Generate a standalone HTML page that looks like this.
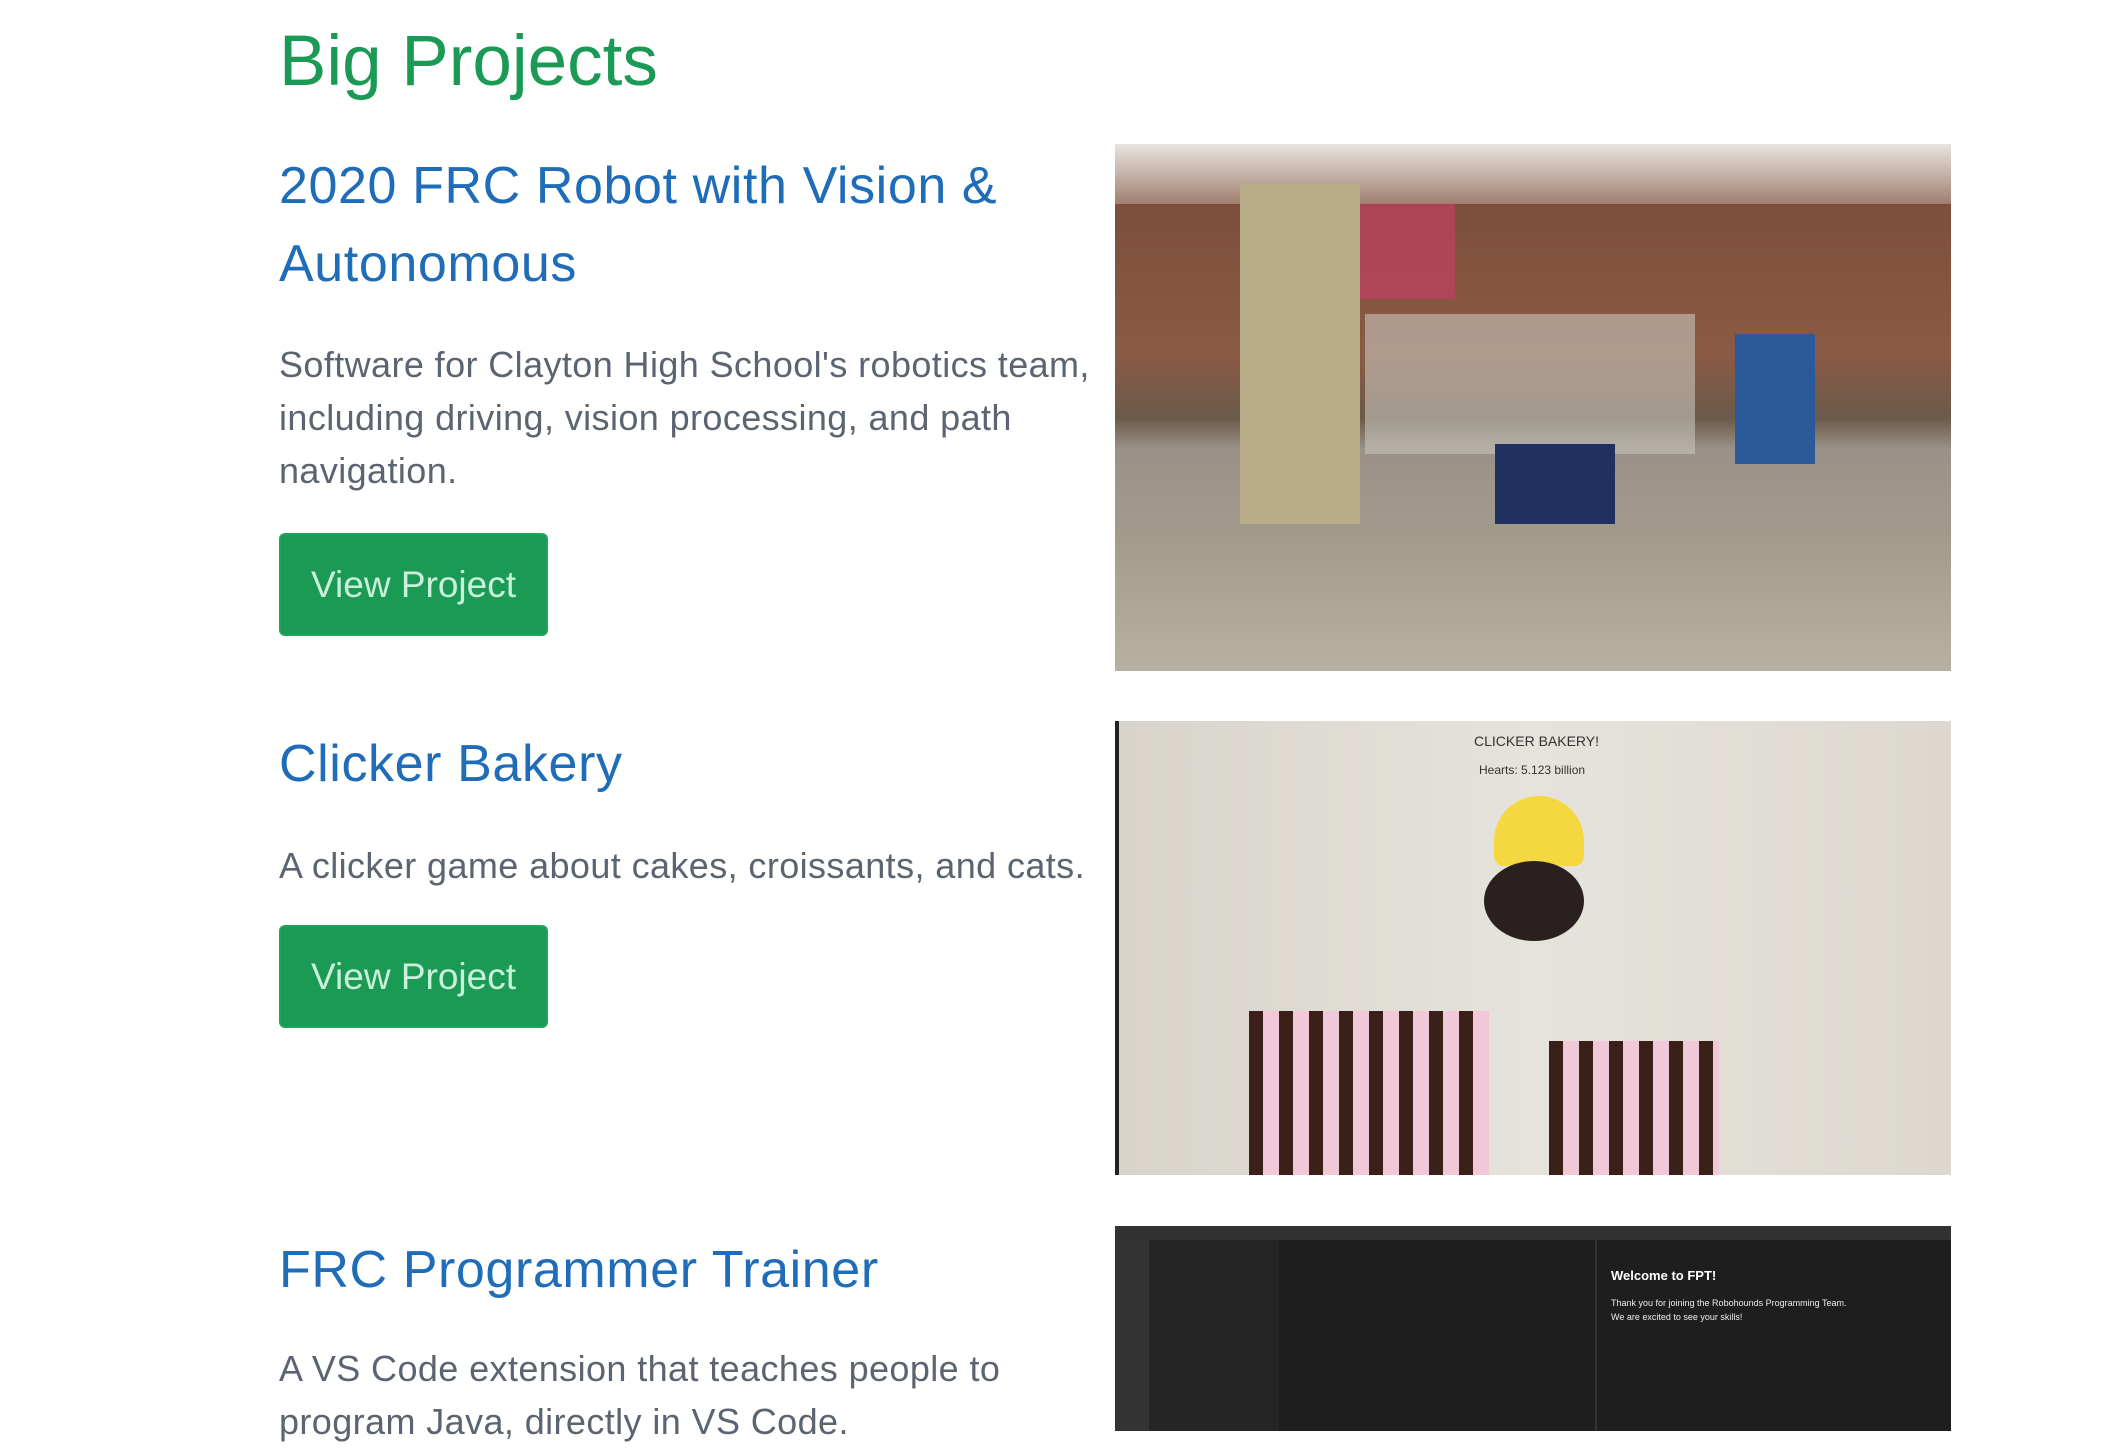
<!DOCTYPE html>
<html><head><meta charset="utf-8"><style>
body{margin:0;width:2123px;height:1431px;background:#fff;position:relative;overflow:hidden;font-family:"Liberation Sans",sans-serif}
.a{position:absolute;white-space:nowrap}
h1,h2,p{margin:0;font-weight:normal}
.t{left:279px;top:22px;font-size:71px;line-height:80px;color:#1a9a55}
.h{left:279px;font-size:52px;line-height:78px;color:#1f6db8;letter-spacing:0.6px}
.p{left:279px;font-size:36px;line-height:53px;color:#5b6470;letter-spacing:0.4px}
.b{left:279px;width:269px;height:103px;background:#1a9a55;border:2px solid #22a35c;box-sizing:border-box;border-radius:6px;color:#c9f0d8;font-size:37px;line-height:99px;text-align:center}
.img{position:absolute;left:1115px;width:836px;overflow:hidden}
</style></head><body>
<h1 class="a t">Big Projects</h1>
<h2 class="a h" style="top:147px">2020 FRC Robot with Vision &amp;<br>Autonomous</h2>
<p class="a p" style="top:338px">Software for Clayton High School's robotics team,<br>including driving, vision processing, and path<br>navigation.</p>
<div class="a b" style="top:533px">View Project</div>
<h2 class="a h" style="top:725px">Clicker Bakery</h2>
<p class="a p" style="top:839px">A clicker game about cakes, croissants, and cats.</p>
<div class="a b" style="top:925px">View Project</div>
<h2 class="a h" style="top:1231px">FRC Programmer Trainer</h2>
<p class="a p" style="top:1342px">A VS Code extension that teaches people to<br>program Java, directly in VS Code.</p>

<div class="img" style="top:144px;height:527px;background:linear-gradient(#7a4a3a 0%,#8a5a45 40%,#6b5a4a 52%,#9a9288 58%,#b0a898 100%)">
<div style="position:absolute;left:0;top:0;width:836px;height:60px;background:linear-gradient(#e8e4e0,#a08070)"></div>
<div style="position:absolute;left:125px;top:40px;width:120px;height:400px;background:#b8ad88"></div>
<div style="position:absolute;left:245px;top:60px;width:95px;height:95px;background:#c04060;opacity:.7"></div>
<div style="position:absolute;left:250px;top:170px;width:330px;height:140px;background:#c8c4bc;opacity:.6"></div>
<div style="position:absolute;left:380px;top:300px;width:120px;height:80px;background:#203060"></div>
<div style="position:absolute;left:620px;top:190px;width:80px;height:130px;background:#2a5a9a"></div>
<div style="position:absolute;left:0;top:380px;width:836px;height:147px;background:linear-gradient(#a09888,#b8b0a0)"></div>
</div>

<div class="img" style="top:721px;height:454px;background:linear-gradient(90deg,#d8d4cc,#e6e3dc 50%,#dcd8d0);border-left:4px solid #222;box-sizing:border-box">
<div class="a" style="left:355px;top:12px;font-size:14px;color:#333">CLICKER BAKERY!</div>
<div class="a" style="left:360px;top:42px;font-size:12px;color:#333">Hearts: 5.123 billion</div>
<div style="position:absolute;left:375px;top:75px;width:90px;height:70px;border-radius:45px 45px 10px 10px;background:#f5d840"></div>
<div style="position:absolute;left:365px;top:140px;width:100px;height:80px;border-radius:50%;background:#2a2020"></div>
<div style="position:absolute;left:130px;top:290px;width:240px;height:164px;background:repeating-linear-gradient(90deg,#3a2018 0 14px,#f0c8d8 14px 30px)"></div>
<div style="position:absolute;left:430px;top:320px;width:170px;height:134px;background:repeating-linear-gradient(90deg,#3a2018 0 14px,#f0c8d8 14px 30px)"></div>
</div>

<div class="img" style="top:1226px;height:205px;background:#1e1e1e">
<div style="position:absolute;left:0;top:0;width:836px;height:14px;background:#323233"></div>
<div style="position:absolute;left:0;top:14px;width:34px;height:191px;background:#333"></div>
<div style="position:absolute;left:34px;top:14px;width:130px;height:191px;background:#252526"></div>
<div style="position:absolute;left:480px;top:14px;width:356px;height:191px;background:#1e1e1e;border-left:2px solid #333"></div>
<div class="a" style="left:496px;top:42px;font-size:13px;color:#fff;font-weight:bold">Welcome to FPT!</div>
<div class="a" style="left:496px;top:70px;font-size:9px;color:#eee;line-height:14px">Thank you for joining the Robohounds Programming Team.<br>We are excited to see your skills!</div>
</div>
</body></html>
